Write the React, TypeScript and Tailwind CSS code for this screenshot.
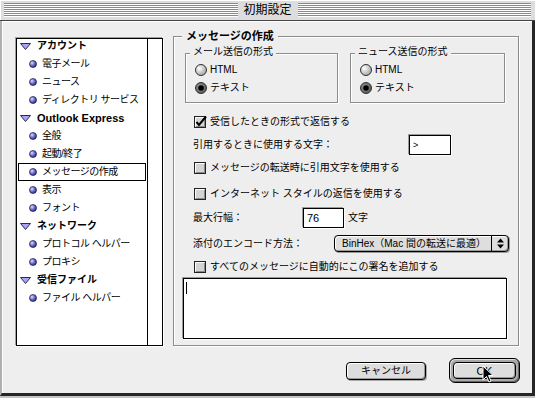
import React from "react";

function Stripes() {
  return (
    <div className="flex-1 flex flex-col">
      {Array.from({ length: 7 }).map((_, i) => (
        <React.Fragment key={i}>
          <div className="h-px bg-[#8a8a8a]" />
          <div className="h-px bg-white" />
        </React.Fragment>
      ))}
    </div>
  );
}

function Triangle() {
  return (
    <svg width="11" height="7" viewBox="0 0 11 7" className="shrink-0">
      <polygon points="0.5,0.5 10.5,0.5 5.5,6.5" fill="#a6a6f2" stroke="#2a2a55" strokeWidth="1" />
    </svg>
  );
}

function Bullet() {
  return (
    <svg width="8" height="8" viewBox="0 0 8 8" className="shrink-0">
      <defs>
        <radialGradient id="bul" cx="0.35" cy="0.35" r="0.7">
          <stop offset="0" stopColor="#e0e0ff" />
          <stop offset="0.5" stopColor="#7070d0" />
          <stop offset="1" stopColor="#2a2a80" />
        </radialGradient>
      </defs>
      <circle cx="4" cy="4" r="3.5" fill="url(#bul)" stroke="#1a1a40" strokeWidth="0.7" />
    </svg>
  );
}

function Radio({ on }: { on?: boolean }) {
  return (
    <svg width="12" height="12" viewBox="0 0 12 12" className="shrink-0">
      <defs>
        <radialGradient id="radoff" cx="0.35" cy="0.35" r="0.75">
          <stop offset="0" stopColor="#ffffff" />
          <stop offset="1" stopColor="#9a9a9a" />
        </radialGradient>
        <radialGradient id="radon" cx="0.4" cy="0.4" r="0.7">
          <stop offset="0" stopColor="#9a9a9a" />
          <stop offset="1" stopColor="#505050" />
        </radialGradient>
      </defs>
      <circle cx="6" cy="6" r="5.5" fill={on ? "url(#radon)" : "url(#radoff)"} stroke="#333" strokeWidth="1" />
      {on && <circle cx="6" cy="6" r="2.8" fill="#000" />}
    </svg>
  );
}

function Check({ on }: { on?: boolean }) {
  return (
    <svg width="12" height="12" viewBox="0 0 12 12" className="shrink-0 overflow-visible">
      <rect x="0.5" y="0.5" width="11" height="11" fill="#d4d4d4" stroke="#222" />
      <line x1="1.5" y1="1.5" x2="10" y2="1.5" stroke="#fff" />
      <line x1="1.5" y1="1.5" x2="1.5" y2="10" stroke="#fff" />
      <line x1="2" y1="10.5" x2="10.5" y2="10.5" stroke="#8a8a8a" />
      <line x1="10.5" y1="2" x2="10.5" y2="10.5" stroke="#8a8a8a" />
      {on && <path d="M2.5 6 L5 9 L12 0.5" fill="none" stroke="#000" strokeWidth="2" />}
    </svg>
  );
}

type Row = { label: string; header?: boolean; selected?: boolean; latin?: boolean };

const rows: Row[] = [
  { label: "アカウント", header: true },
  { label: "電子メール" },
  { label: "ニュース" },
  { label: "ディレクトリ サービス" },
  { label: "Outlook Express", header: true, latin: true },
  { label: "全般" },
  { label: "起動/終了" },
  { label: "メッセージの作成", selected: true },
  { label: "表示" },
  { label: "フォント" },
  { label: "ネットワーク", header: true },
  { label: "プロトコル ヘルパー" },
  { label: "プロキシ" },
  { label: "受信ファイル", header: true },
  { label: "ファイル ヘルパー" },
];

function ListPanel() {
  return (
    <div className="mt-[8px] w-[147px] h-[308px] shrink-0 border border-black bg-white flex shadow-[1px_1px_0_#ffffff,-1px_-1px_0_#a0a0a0]">
      <div className="w-[130px] h-full overflow-hidden">
        <div className="-mt-[2px] flex flex-col">
          {rows.map((r) => (
            <div
              key={r.label}
              className={
                r.selected
                  ? "h-[18px] mx-[1px] flex items-center border border-black pl-[10px] gap-[5px]"
                  : r.header
                  ? "h-[18px] mx-[1px] flex items-center border border-transparent pl-[1px] gap-[6px]"
                  : "h-[18px] mx-[1px] flex items-center border border-transparent pl-[10px] gap-[5px]"
              }
            >
              {r.header ? <Triangle /> : <Bullet />}
              <span
                className={
                  r.header
                    ? r.latin
                      ? "font-bold text-[11px] leading-[12px] whitespace-nowrap"
                      : "font-bold text-[10px] leading-[12px] whitespace-nowrap"
                    : "text-[10px] leading-[12px] whitespace-nowrap tracking-[-0.5px]"
                }
              >
                {r.label}
              </span>
            </div>
          ))}
        </div>
      </div>
      <div className="flex-1 border-l border-black" />
    </div>
  );
}

function SubGroup({ title, w }: { title: string; w: string }) {
  return (
    <div className={`${w} h-[50px] relative border border-[#8c8c8c] shadow-[inset_1px_1px_0_#ffffff,1px_1px_0_#ffffff] pt-[7px] pl-[9px] flex flex-col`}>
      <span className="absolute -top-[8px] left-[4px] px-[3px] bg-[#eeeeee] text-[10px] leading-[12px] whitespace-nowrap">
        {title}
      </span>
      <div className="h-[18px] flex items-center gap-[3px]">
        <Radio />
        <span className="text-[10px] leading-[12px]">HTML</span>
      </div>
      <div className="h-[18px] flex items-center gap-[3px]">
        <Radio on />
        <span className="text-[10px] leading-[12px]">テキスト</span>
      </div>
    </div>
  );
}

function CheckRow({ label, on, mt }: { label: string; on?: boolean; mt: string }) {
  return (
    <div className={`${mt} ml-[20px] h-[16px] flex items-center gap-[4px]`}>
      <Check on={on} />
      <span className="text-[10px] leading-[12px] whitespace-nowrap">{label}</span>
    </div>
  );
}

const field =
  "bg-white border border-black shadow-[1px_1px_0_#ffffff,-1px_-1px_0_#9a9a9a] flex items-center";

export default function App() {
  return (
    <div className="w-[535px] h-[398px] flex flex-col bg-[#c4c4c4] text-black overflow-hidden relative font-['Liberation_Sans','Noto_Sans_CJK_JP',sans-serif]">
      {/* Title bar */}
      <div className="h-[21px] shrink-0 flex items-center px-[4px] bg-[#dddddd] border-b border-[#444444] shadow-[inset_1px_1px_0_#ffffff]">
        <Stripes />
        <span className="px-[6px] text-[12px] leading-[14px] whitespace-nowrap">初期設定</span>
        <Stripes />
      </div>

      {/* Body */}
      <div className="h-[375px] shrink-0 flex flex-col bg-[#eeeeee] border-l-2 border-l-[#b0b0b0] border-r-[3px] border-r-[#262626] border-b-[3px] border-b-[#262626] shadow-[inset_1px_1px_0_#ffffff]">
        <div className="flex items-start pl-[14px] pt-[9px]">
          <ListPanel />

          <div className="ml-[10px] mt-[6px] w-[346px] h-[310px] shrink-0 relative border border-[#8c8c8c] shadow-[inset_1px_1px_0_#ffffff,1px_1px_0_#ffffff] flex flex-col">
            <span className="absolute -top-[7px] left-[8px] px-[4px] bg-[#eeeeee] font-bold text-[11px] leading-[12px] whitespace-nowrap">
              メッセージの作成
            </span>

            <div className="mt-[16px] ml-[11px] flex gap-[12px]">
              <SubGroup title="メール送信の形式" w="w-[153px]" />
              <SubGroup title="ニュース送信の形式" w="w-[155px]" />
            </div>

            <CheckRow mt="mt-[11px]" on label="受信したときの形式で返信する" />

            <div className="mt-[5px] ml-[19px] h-[20px] flex items-center">
              <span className="w-[216px] text-[10px] leading-[12px] whitespace-nowrap">引用するときに使用する文字：</span>
              <div className={`w-[42px] h-[20px] pl-[3px] ${field}`}>
                <span className="text-[9px] leading-[10px]">&gt;</span>
              </div>
            </div>

            <CheckRow mt="mt-[5px]" label="メッセージの転送時に引用文字を使用する" />
            <CheckRow mt="mt-[10px]" label="インターネット スタイルの返信を使用する" />

            <div className="mt-[6px] ml-[19px] h-[20px] flex items-center">
              <span className="w-[110px] text-[10px] leading-[12px] whitespace-nowrap">最大行幅：</span>
              <div className={`w-[41px] h-[20px] pl-[3px] ${field}`}>
                <span className="text-[11px] leading-[12px]">76</span>
              </div>
              <span className="ml-[4px] text-[10px] leading-[12px]">文字</span>
            </div>

            <div className="mt-[7px] ml-[19px] h-[17px] flex items-center">
              <span className="w-[141px] text-[10px] leading-[12px] whitespace-nowrap">添付のエンコード方法：</span>
              <div className="w-[175px] h-[17px] rounded-[4px] border border-black bg-[#dedede] shadow-[inset_1px_1px_0_#ffffff,inset_-1px_-1px_0_#9a9a9a,1px_1px_0_#9a9a9a] flex items-center">
                <span className="flex-1 pl-[7px] text-[10px] leading-[12px] whitespace-nowrap">BinHex（Mac 間の転送に最適）</span>
                <div className="w-[17px] h-full border-l border-black flex items-center justify-center">
                  <svg width="7" height="11" viewBox="0 0 7 11">
                    <polygon points="3.5,0.5 7,4.5 0,4.5" fill="#000" />
                    <polygon points="0,6.5 7,6.5 3.5,10.5" fill="#000" />
                  </svg>
                </div>
              </div>
            </div>

            <CheckRow mt="mt-[7px]" label="すべてのメッセージに自動的にこの署名を追加する" />

            <div className={`mt-[3px] ml-[9px] w-[324px] h-[61px] items-start! pl-[2px] pt-[3px] ${field}`}>
              <div className="w-px h-[12px] bg-black" />
            </div>
          </div>
        </div>

        <div className="mt-[12px] flex items-center justify-end pr-[12px]">
          <div className="mr-[23px] w-[80px] h-[18px] rounded-[4px] border border-black bg-[#dddddd] shadow-[inset_1px_1px_0_#ffffff,inset_-1px_-1px_0_#999999,1px_1px_0_#aaaaaa] flex items-center justify-center text-[10px] leading-[12px]">
            キャンセル
          </div>
          <div className="w-[71px] h-[25px] rounded-[6px] border border-black bg-[#a8a8a8] p-[3px] shadow-[inset_1px_1px_0_#dddddd,inset_-1px_-1px_0_#666666]">
            <div className="w-full h-full rounded-[4px] border border-black bg-[#dddddd] shadow-[inset_1px_1px_0_#ffffff,inset_-1px_-1px_0_#999999] flex items-center justify-center text-[11px] leading-[12px]">
              OK
            </div>
          </div>
        </div>
      </div>

      {/* Mouse cursor */}
      <svg width="12" height="19" viewBox="0 0 12 19" className="absolute left-[482px] top-[365px]">
        <path d="M1 1 L1 15 L4.5 11.5 L7 17 L9 16 L6.5 10.5 L11 10.5 Z" fill="#000" stroke="#fff" strokeWidth="1" strokeLinejoin="miter" />
      </svg>
    </div>
  );
}
